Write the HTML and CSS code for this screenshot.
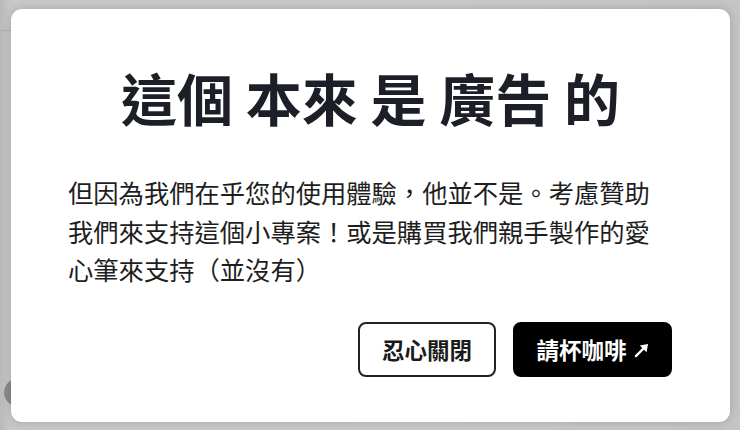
FILE: index.html
```html
<!DOCTYPE html>
<html lang="zh-Hant">
<head>
<meta charset="utf-8">
<title>這個本來是廣告的</title>
<link rel="stylesheet" href="styles.css">
</head>
<body>
<div class="backdrop">
  <span class="bg-line"></span>
  <span class="bg-dot"></span>
  <div class="modal">
    <h1 class="title">這個 本來 是 廣告 的</h1>
    <p class="message">但因為我們在乎您的使用體驗，他並不是。考慮贊助我們來支持這個小專案！或是購買我們親手製作的愛心筆來支持（並沒有）</p>
    <div class="actions">
      <button class="btn btn-outline" type="button">忍心關閉</button>
      <button class="btn btn-solid" type="button">請杯咖啡<svg class="arrow" viewBox="0 0 16 16" aria-hidden="true"><line x1="2" y1="14" x2="10" y2="6" stroke="#fff" stroke-width="2.4" stroke-linecap="round"/><polygon points="15,1 6.2,2.6 13.4,9.8" fill="#fff"/></svg></button>
    </div>
  </div>
</div>
</body>
</html>
```

FILE: styles.css
```css
html, body {
  margin: 0;
  padding: 0;
}

body {
  width: 740px;
  height: 430px;
  overflow: hidden;
  font-family: "Noto Sans CJK TC", "Noto Sans", sans-serif;
}

.backdrop {
  position: relative;
  width: 740px;
  height: 430px;
  box-sizing: border-box;
  padding: 9px 10px 8px 11px;
  background: linear-gradient(90deg, #b9b9b9 0px, #c8c8c8 10px, #cacaca 60%, #c4c4c4 100%);
}

.bg-line {
  position: absolute;
  left: 0;
  top: 30px;
  width: 12px;
  height: 1px;
  background: #b0b0b0;
}

.bg-dot {
  position: absolute;
  left: 4px;
  top: 379px;
  width: 26px;
  height: 27px;
  border-radius: 50%;
  background: #8a8a8a;
}

.modal {
  position: relative;
  box-sizing: border-box;
  width: 719px;
  height: 413px;
  background: #ffffff;
  border-radius: 11px;
  box-shadow: 0 0 10px rgba(0, 0, 0, 0.18);
  padding: 54px 57px 0 57px;
  display: flex;
  flex-direction: column;
}

.title {
  margin: 0;
  text-align: center;
  font-size: 56px;
  line-height: 67px;
  font-weight: 700;
  color: #1c1f27;
}

.message {
  margin: 43px 0 0 0;
  font-size: 25.3px;
  line-height: 38.5px;
  font-weight: 400;
  color: #1e1e1e;
}

.actions {
  margin-top: 33px;
  display: flex;
  justify-content: flex-end;
  gap: 17px;
  padding-right: 1px;
}

.btn {
  box-sizing: border-box;
  height: 55px;
  display: inline-flex;
  align-items: center;
  justify-content: center;
  font-family: "Noto Sans CJK TC", "Noto Sans", sans-serif;
  font-size: 22.5px;
  font-weight: 700;
  border-radius: 8px;
  cursor: pointer;
}

.btn-outline {
  width: 138px;
  background: #ffffff;
  color: #1a1a1a;
  border: 2px solid #222222;
}

.btn-solid {
  width: 159px;
  background: #000000;
  color: #ffffff;
  border: 2px solid #000000;
}

.arrow {
  width: 15px;
  height: 15px;
  margin-left: 7px;
  margin-top: 2px;
}
```
